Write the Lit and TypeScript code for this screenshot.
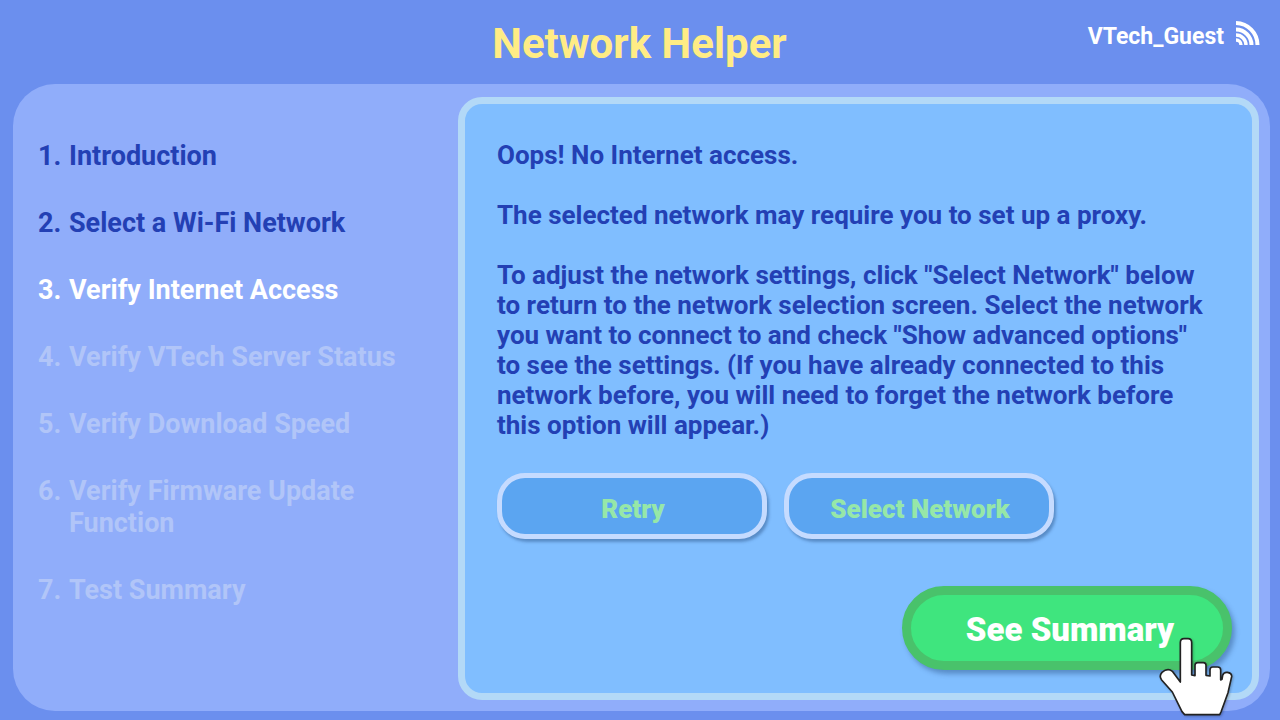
import { LitElement, html, css } from "lit";
import { customElement } from "lit/decorators.js";
import { classMap } from "lit/directives/class-map.js";

const steps = [
  { label: "Introduction", state: "done" },
  { label: "Select a Wi-Fi Network", state: "done" },
  { label: "Verify Internet Access", state: "current" },
  { label: "Verify VTech Server Status", state: "pending" },
  { label: "Verify Download Speed", state: "pending" },
  { label: "Verify Firmware Update Function", state: "pending" },
  { label: "Test Summary", state: "pending" },
];

@customElement("app-root")
export class AppRoot extends LitElement {
  static styles = css`
    :host {
      display: flex;
      flex-direction: column;
      box-sizing: border-box;
      min-height: 100vh;
      padding: 0 10px 9px 13px;
      background: #6b8fee;
      color: #2340b4;
      font-family: Roboto, sans-serif;
      font-weight: 700;
    }
    * { box-sizing: border-box; }
    header {
      display: grid;
      grid-template-columns: 1fr auto 1fr;
      height: 84px;
    }
    h1 {
      grid-column: 2;
      margin: 0;
      padding: 19px 4px 0 0;
      font-size: 42px;
      line-height: 50px;
      font-weight: 700;
      color: #ffec85;
    }
    .wifi {
      display: flex;
      justify-content: flex-end;
      gap: 12px;
      padding: 21px 10px 0 0;
      font-size: 23px;
      line-height: 32px;
      color: #fff;
    }
    .wifi svg { width: 24px; height: 24px; }
    .shell {
      flex: 1;
      display: grid;
      grid-template-columns: 445px 1fr;
      padding: 13px 11px 11px 0;
      border-radius: 42px;
      background: #90adfa;
    }
    ol {
      margin: 0;
      padding: 43px 40px 0 25px;
      list-style: none;
      display: flex;
      flex-direction: column;
      gap: 35px;
      font-size: 27px;
      line-height: 32px;
    }
    li { display: flex; }
    .num { flex: 0 0 31px; }
    .current { color: #fff; }
    .pending { color: #b1c5f8; }
    .panel {
      display: flex;
      flex-direction: column;
      padding: 36px 20px 23px 32px;
      border: 7px solid #b3d9f7;
      border-radius: 24px;
      background: #80beff;
    }
    p {
      margin: 0 20px 30px 0;
      font-size: 26px;
      line-height: 30px;
    }
    button {
      font-family: inherit;
      cursor: pointer;
    }
    .actions { display: flex; gap: 17px; margin-top: 3px; }
    .secondary {
      width: 270px;
      height: 66px;
      padding: 6px 0 0 2px;
      border: 5px solid #c5dbff;
      border-radius: 28px;
      background: #5ba5f1;
      box-shadow: 2px 3px 3px rgba(40, 80, 130, 0.45);
      color: #96e7a8;
      font-size: 26px;
      font-weight: 900;
    }
    .footer {
      position: relative;
      display: flex;
      justify-content: flex-end;
      margin-top: auto;
    }
    .primary {
      width: 330px;
      height: 84px;
      padding: 2px 0 0 6px;
      border: 9px solid #49c26b;
      border-radius: 42px;
      background: #3fe57e;
      box-shadow: 3px 4px 5px rgba(40, 80, 130, 0.45);
      color: #fff;
      font-size: 33px;
      font-weight: 900;
    }
    .hand {
      position: absolute;
      right: -2px;
      bottom: -47px;
      width: 76px;
      height: 80px;
      filter: drop-shadow(1px 1px 1px rgba(0, 0, 0, 0.25));
      pointer-events: none;
    }
  `;

  render() {
    return html`
      <header>
        <h1>Network Helper</h1>
        <div class="wifi">
          <span>VTech_Guest</span>
          <svg viewBox="0 0 24 24" fill="none" stroke="#fff" aria-hidden="true">
            <path
              stroke-width="4"
              d="M0 2A22 22 0 0 1 21.5 24M0 8.5A15.5 15.5 0 0 1 15.5 24"
            />
            <path stroke-width="3.4" d="M0 14A10 10 0 0 1 10 24M0 19A5 5 0 0 1 5 24" />
          </svg>
        </div>
      </header>
      <main class="shell">
        <ol>
          ${steps.map(
            (s, i) => html`<li class=${classMap({ [s.state]: true })}>
              <span class="num">${i + 1}.</span><span>${s.label}</span>
            </li>`
          )}
        </ol>
        <section class="panel">
          <p>Oops! No Internet access.</p>
          <p>The selected network may require you to set up a proxy.</p>
          <p>
            To adjust the network settings, click "Select Network" below to return to the network
            selection screen. Select the network you want to connect to and check "Show advanced
            options" to see the settings. (If you have already connected to this network before, you
            will need to forget the network before this option will appear.)
          </p>
          <div class="actions">
            <button class="secondary">Retry</button>
            <button class="secondary">Select Network</button>
          </div>
          <div class="footer">
            <button class="primary">See Summary</button>
            <svg class="hand" viewBox="54 37 228 240" aria-hidden="true">
              <path
                fill="#fff"
                stroke="#222"
                stroke-width="5"
                stroke-linejoin="round"
                d="M121 172V54Q121 42 132 42H144Q155 42 155 54V151L165 153V122Q165 114 173 114H190Q198 114 198 122V152L210 154V136Q210 127 218 127H233Q242 127 242 136V166L246 164L248 152Q251 142 262 143Q276 145 275 156L264 204L243 262L239 270H134L126 261L97 202L65 166Q56 154 66 143Q83 129 97 140Z"
              />
            </svg>
          </div>
        </section>
      </main>
    `;
  }
}
